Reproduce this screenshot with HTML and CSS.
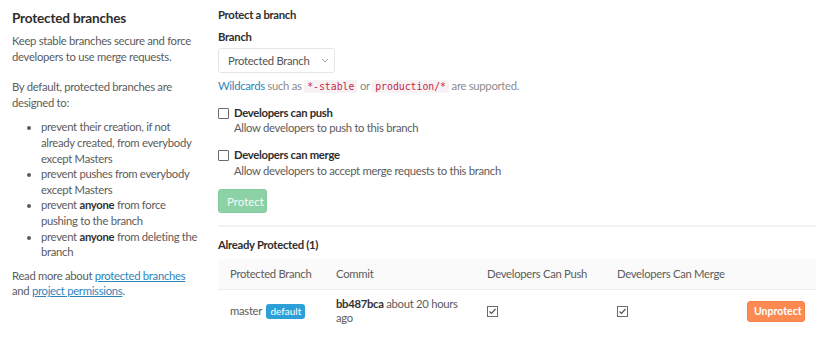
FILE: index.html
```html
<!DOCTYPE html>
<html lang="en">
<head>
  <meta charset="UTF-8">
  <title>Protected branches</title>
  <link rel="stylesheet" href="styles.css">
</head>
<body>
  <div class="page">
    <div class="side">
      <h4>Protected branches</h4>
      <p class="lead">Keep stable branches secure and force developers to use merge requests.</p>
      <p>By default, protected branches are designed to:</p>
      <ul>
        <li>prevent their creation, if not already created, from everybody except Masters</li>
        <li>prevent pushes from everybody except Masters</li>
        <li>prevent <strong>anyone</strong> from force pushing to the branch</li>
        <li>prevent <strong>anyone</strong> from deleting the branch</li>
      </ul>
      <p>Read more about <a href="#">protected branches</a> and <a href="#">project permissions</a>.</p>
    </div>

    <div class="main">
      <form class="protect-form">
        <h5>Protect a branch</h5>
        <label class="label">Branch</label>
        <div class="select">
          <span>Protected Branch</span>
          <svg width="8" height="5" viewBox="0 0 8 5"><path d="M1 1l3 3 3-3" fill="none" stroke="#a8a8a8" stroke-width="1"/></svg>
        </div>
        <p class="help"><a href="#">Wildcards</a> such as <code>*-stable</code> or <code>production/*</code> are supported.</p>

        <div class="check">
          <span class="box"></span>
          <div>
            <strong>Developers can push</strong>
            <span class="desc">Allow developers to push to this branch</span>
          </div>
        </div>
        <div class="check">
          <span class="box"></span>
          <div>
            <strong>Developers can merge</strong>
            <span class="desc">Allow developers to accept merge requests to this branch</span>
          </div>
        </div>

        <button type="button" class="btn-protect">Protect</button>
      </form>

      <h5 class="already">Already Protected (1)</h5>
      <table class="branches">
        <thead>
          <tr>
            <th class="c-branch">Protected Branch</th>
            <th class="c-commit">Commit</th>
            <th class="c-push">Developers Can Push</th>
            <th class="c-merge">Developers Can Merge</th>
            <th></th>
          </tr>
        </thead>
        <tbody>
          <tr>
            <td class="nowrap">master <span class="badge">default</span></td>
            <td class="commit"><strong>bb487bca</strong> about 20 hours ago</td>
            <td><svg class="tick" width="11" height="11" viewBox="0 0 11 11"><rect x="0.5" y="0.5" width="10" height="10" fill="#fff" stroke="#6b6b6b"/><path d="M2.5 5.5l2 2 4-4.5" fill="none" stroke="#555" stroke-width="1.2"/></svg></td>
            <td><svg class="tick" width="11" height="11" viewBox="0 0 11 11"><rect x="0.5" y="0.5" width="10" height="10" fill="#fff" stroke="#6b6b6b"/><path d="M2.5 5.5l2 2 4-4.5" fill="none" stroke="#555" stroke-width="1.2"/></svg></td>
            <td class="right"><button type="button" class="btn-unprotect">Unprotect</button></td>
          </tr>
        </tbody>
      </table>
    </div>
  </div>
</body>
</html>
```

FILE: styles.css
```css
body {
  margin: 0;
  font-family: Lato, "Liberation Sans", sans-serif;
  font-size: 11.3px;
  letter-spacing: -0.3px;
  line-height: 15.6px;
  color: #5c5c5c;
  background: #fff;
}
a {
  color: #3084bb;
}
.page {
  display: flex;
  gap: 18px;
  padding: 7px 12px;
}
.side {
  width: 188px;
  flex-shrink: 0;
}
.side h4 {
  margin: 2px 0 6px;
  font-size: 13.6px;
  line-height: 18px;
  letter-spacing: -0.2px;
  color: #2e2e2e;
}
.side p {
  margin: 0 0 8px;
}
.side .lead {
  margin-bottom: 15px;
}
.side ul {
  margin: 9px 0 8px;
  padding-left: 29px;
}
.side strong {
  color: #333;
}
.main {
  flex: 1;
}
h5 {
  margin: 0 0 6px;
  font-size: 11.3px;
  color: #2e2e2e;
}
.protect-form {
  border-bottom: 2px solid #f2f2f2;
  padding-bottom: 12px;
}
.label {
  display: block;
  font-weight: bold;
  color: #2e2e2e;
  margin-bottom: 4px;
}
.select {
  display: flex;
  align-items: center;
  justify-content: space-between;
  box-sizing: border-box;
  width: 117px;
  height: 25px;
  padding: 0 5px 0 9px;
  border: 1px solid #e5e5e5;
  border-radius: 3px;
  color: #555;
}
.help {
  margin: 5px 0 10px;
  color: #8c8c8c;
}
.help a {
  text-decoration: none;
}
code {
  font-family: "DejaVu Sans Mono", monospace;
  font-size: 9.8px;
  letter-spacing: 0;
  color: #c7254e;
  background: #f7f3f4;
  padding: 1px 3px;
  border-radius: 2px;
}
.check {
  display: flex;
  gap: 5px;
  margin-bottom: 11px;
}
.box {
  flex-shrink: 0;
  width: 9px;
  height: 9px;
  margin-top: 3px;
  border: 1px solid #6b6b6b;
  border-radius: 1px;
}
.check strong {
  display: block;
  color: #2e2e2e;
}
.desc {
  display: block;
}
.btn-protect {
  margin-top: 0;
  font-family: inherit;
  font-size: 11.5px;
  color: #f3fbf6;
  background: #8dd1a6;
  border: 1px solid #84cb9f;
  border-radius: 3px;
  padding: 0 8px;
  width: 49px;
  height: 24px;
}
.already {
  margin: 10px 0 6px;
}
.branches {
  width: 100%;
  table-layout: fixed;
  border-collapse: collapse;
}
.branches th {
  text-align: left;
  font-weight: normal;
  white-space: nowrap;
  background: #fafafa;
  border-bottom: 1px solid #eee;
  height: 30px;
  padding: 0 12px;
}
.branches td {
  padding: 7px 12px 9px;
  vertical-align: middle;
  height: 28px;
}
.branches td strong {
  color: #333;
}
.commit {
  line-height: 14.5px;
}
.nowrap {
  white-space: nowrap;
}
.c-branch { width: 82px; }
.c-commit { width: 127px; }
.c-push { width: 106px; }
.c-merge { width: 106px; }
.tick {
  display: block;
}
.badge {
  display: inline-block;
  background: #2d9fd8;
  color: #fff;
  font-size: 10px;
  letter-spacing: 0;
  line-height: 13px;
  padding: 1px 4px;
  border-radius: 3px;
  margin-left: 2px;
}
.right {
  text-align: right;
}
.btn-unprotect {
  font-family: inherit;
  font-size: 10.5px;
  letter-spacing: 0;
  font-weight: bold;
  color: #fff;
  background: #fc8a51;
  border: 1px solid #f7814a;
  border-radius: 3px;
  padding: 0 6px;
  width: 58px;
  height: 21px;
  margin-right: 1px;
}
```
